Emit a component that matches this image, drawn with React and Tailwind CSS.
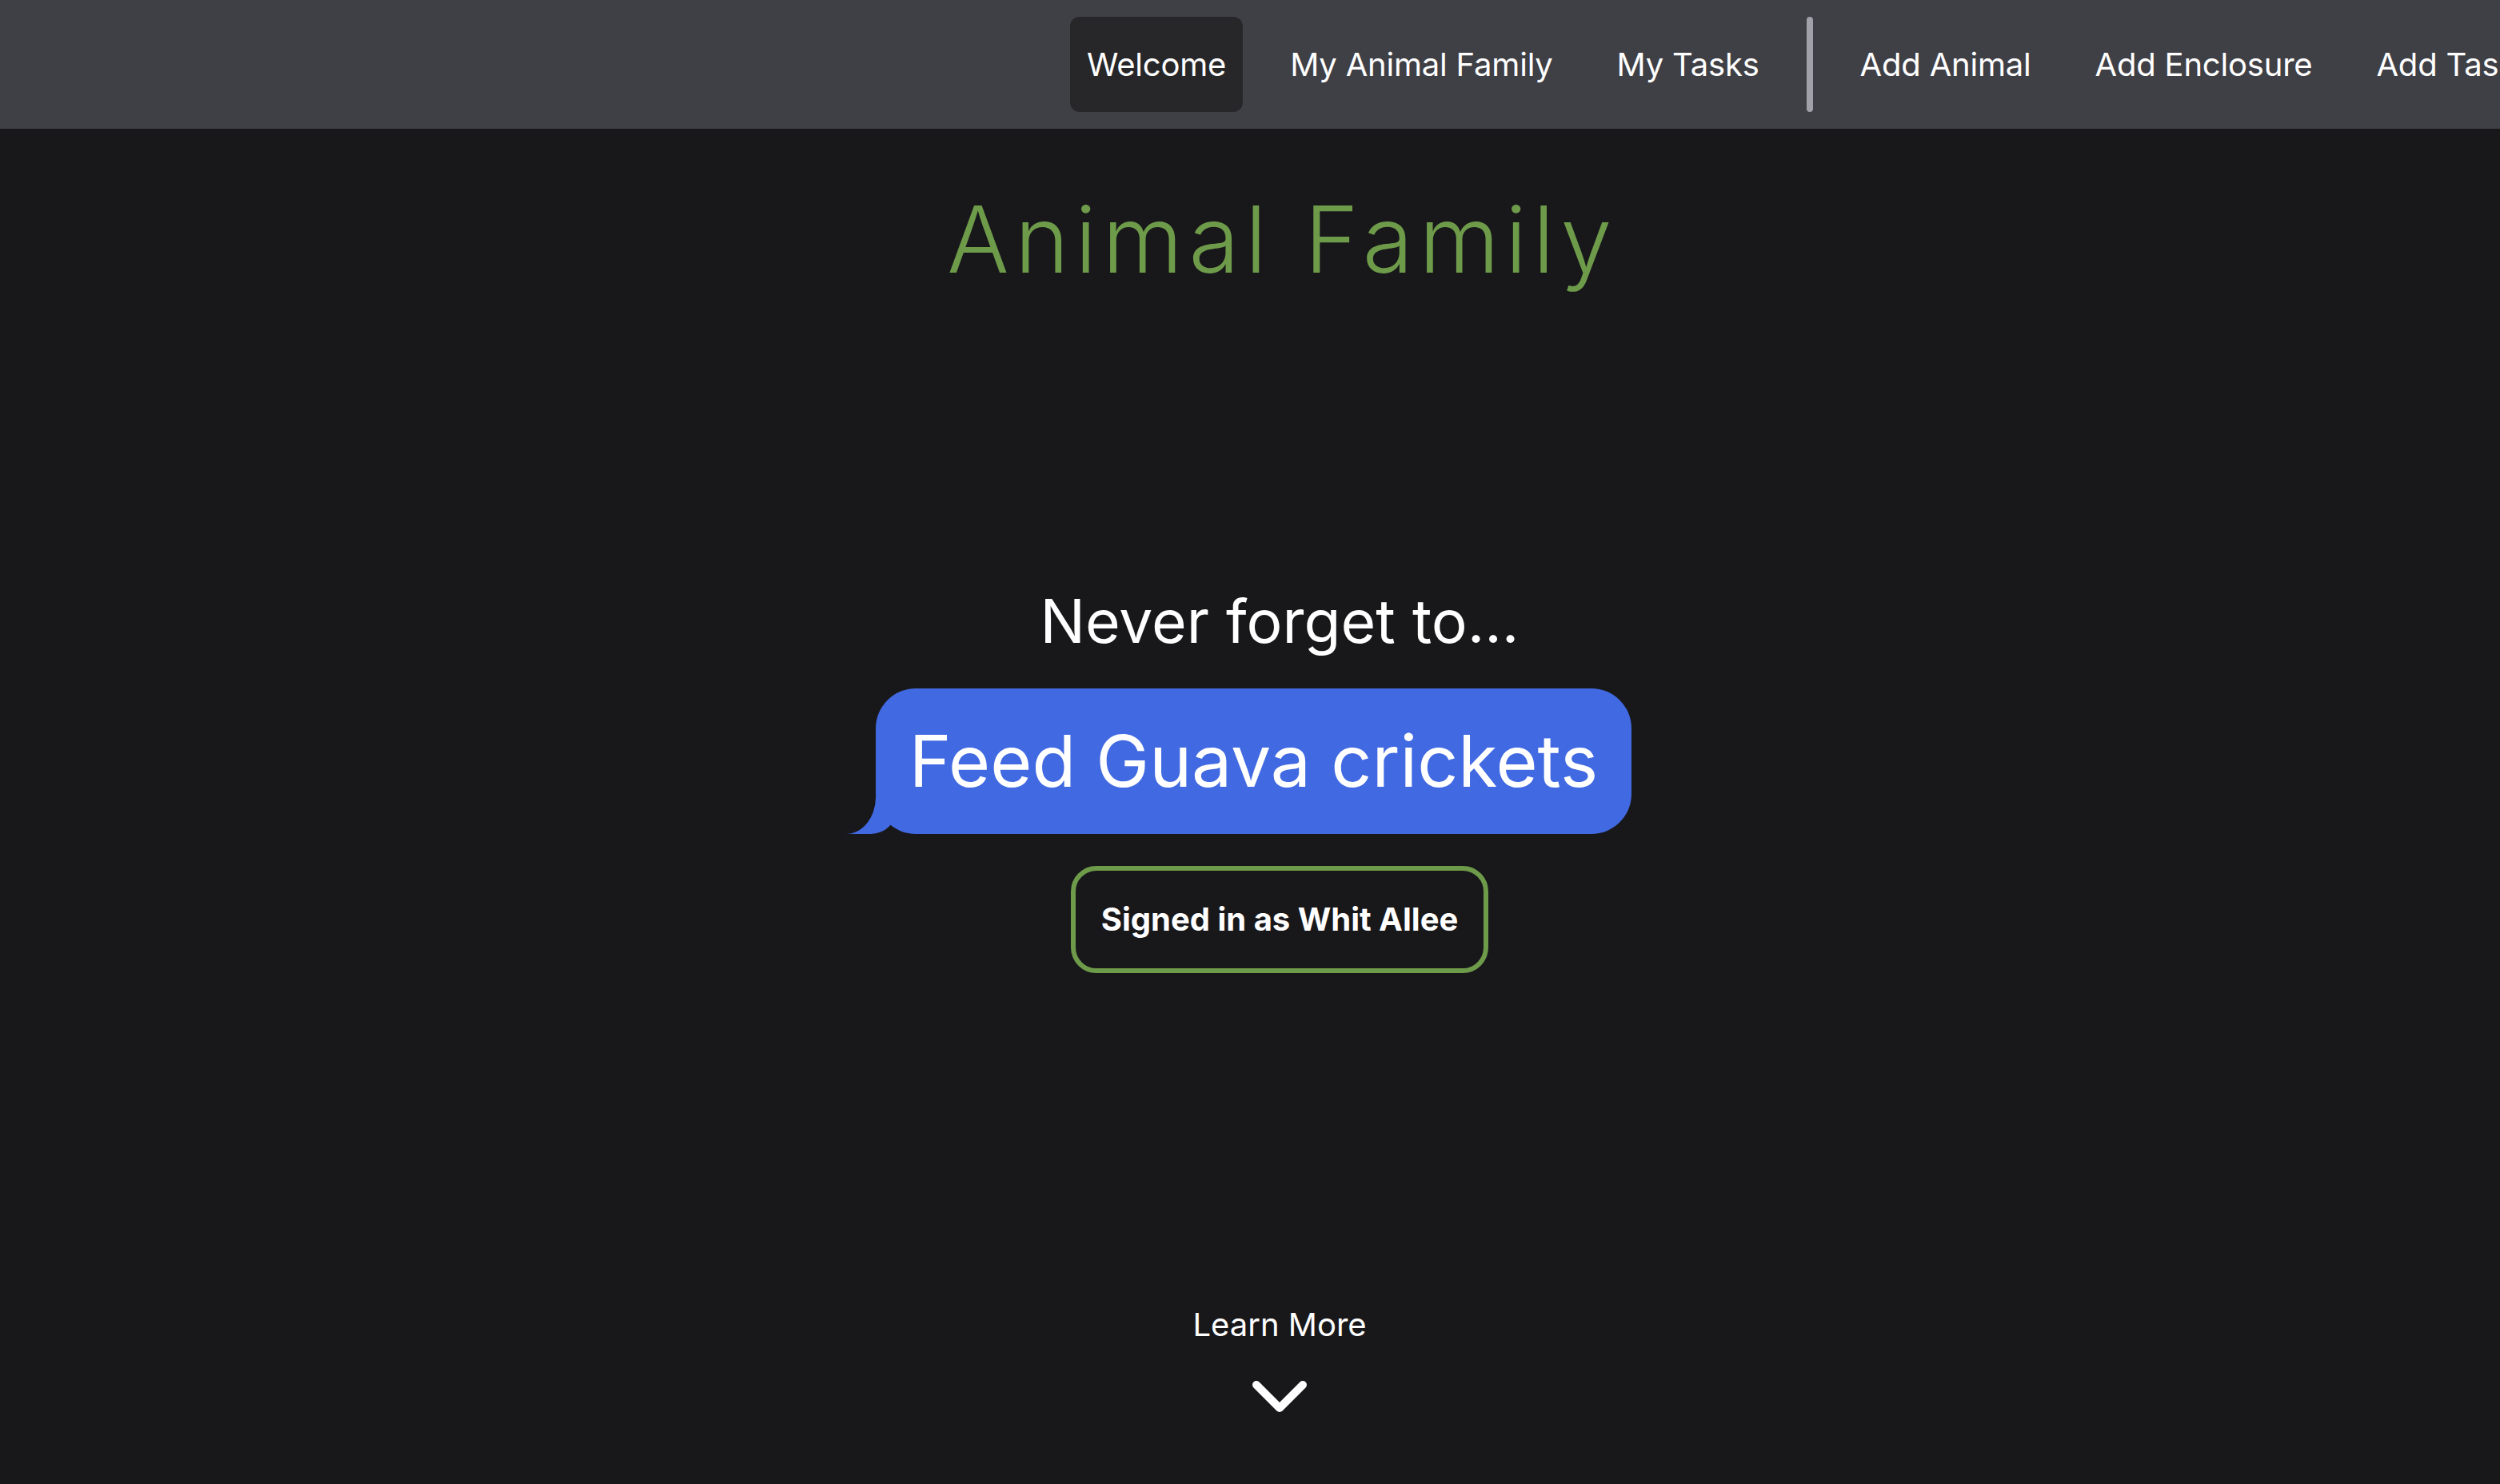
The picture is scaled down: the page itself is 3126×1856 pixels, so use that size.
export default function App() {
  const left = ["My Animal Family", "My Tasks"];
  const right = ["Add Animal", "Add Enclosure", "Add Task"];
  return (
    <div className="w-full h-[1856px] overflow-hidden bg-[#18181b] text-white font-['Inter','Liberation_Sans',sans-serif]">
      <div className="w-[3200px] h-[1856px] flex flex-col">
        <nav className="h-[161px] shrink-0 bg-[#3f3f46] flex items-center gap-[38px] pl-[1338px]">
          <button className="h-[119px] px-[21px] rounded-[12px] bg-[#27272a] text-[40px] tracking-[-0.2px] leading-none text-white">
            Welcome
          </button>
          {left.map((t) => (
            <button key={t} className="h-[119px] px-[21px] text-[40px] tracking-[-0.2px] leading-none text-white whitespace-nowrap">
              {t}
            </button>
          ))}
          <div className="w-[8px] h-[119px] rounded-full bg-[#a1a1aa]" />
          {right.map((t) => (
            <button key={t} className="h-[119px] px-[21px] text-[40px] tracking-[-0.2px] leading-none text-white whitespace-nowrap">
              {t}
            </button>
          ))}
        </nav>
        <main className="flex flex-col items-center">
          <h1 className="mt-[81px] text-[115px] leading-none font-light tracking-[7.5px] ml-[7px] text-[#6e9b4a] font-['Inter','Lato',sans-serif]">
            Animal Family
          </h1>
          <p className="mt-[382px] text-[75px] leading-none">Never forget to...</p>
          <div className="relative mt-[47px] mr-[65px] bg-[#4169e1] rounded-[50px] px-[42px] py-[46px]">
            <svg
              className="absolute left-[-40px] bottom-0 w-[70px] h-[50px]"
              viewBox="-40 -50 70 50"
            >
              <path
                d="M0 -46 A37 46 0 0 1 -37 0 L-6 0 A32 32 0 0 0 26 -32 L26 -46 Z"
                fill="#4169e1"
              />
            </svg>
            <span className="relative block text-[89.5px] leading-none whitespace-nowrap">Feed Guava crickets</span>
          </div>
          <button className="mt-[40px] border-[6px] border-[#6e9b4a] rounded-[32px] px-[32px] py-[41px] text-[40px] font-bold leading-none text-white">
            Signed in as Whit Allee
          </button>
          <button className="mt-[420px] flex flex-col items-center text-white">
            <span className="text-[40px] leading-none">Learn More</span>
            <svg className="mt-[45px] w-[78px] h-[50px]" viewBox="0 0 78 50" fill="none">
              <polyline
                points="10,10 39,39 68,10"
                stroke="white"
                strokeWidth="10"
                strokeLinecap="round"
                strokeLinejoin="round"
              />
            </svg>
          </button>
        </main>
      </div>
    </div>
  );
}
